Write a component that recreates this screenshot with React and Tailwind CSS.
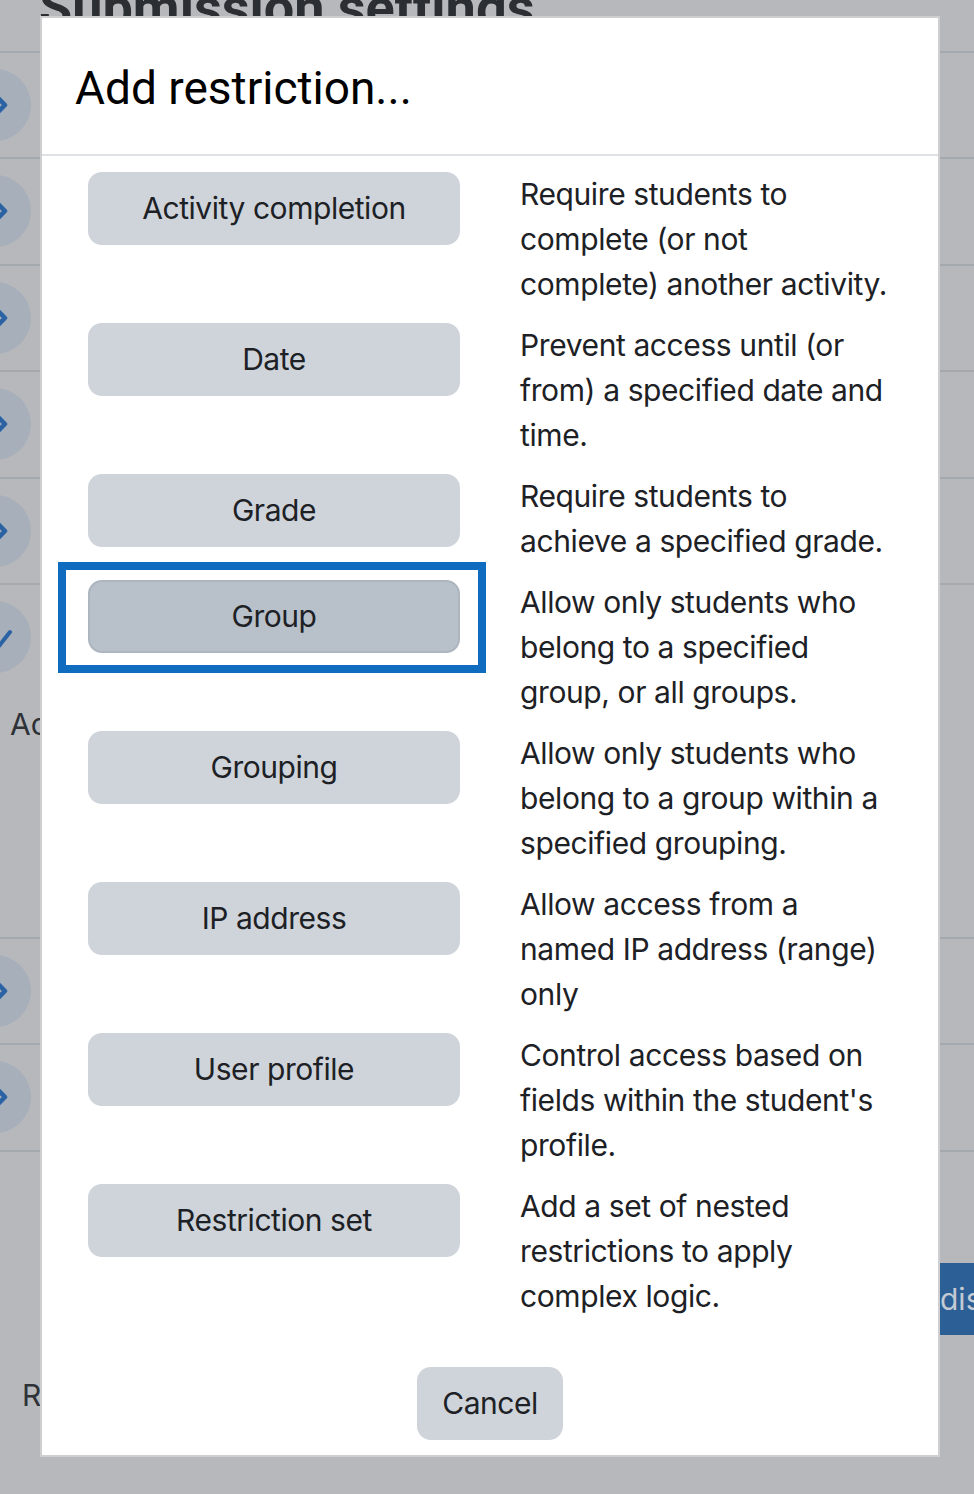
import React from "react";

const rows = [
  { label: "Activity completion", lines: ["Require students to", "complete (or not", "complete) another activity."] },
  { label: "Date", lines: ["Prevent access until (or", "from) a specified date and", "time."] },
  { label: "Grade", lines: ["Require students to", "achieve a specified grade."] },
  { label: "Group", lines: ["Allow only students who", "belong to a specified", "group, or all groups."], focused: true },
  { label: "Grouping", lines: ["Allow only students who", "belong to a group within a", "specified grouping."] },
  { label: "IP address", lines: ["Allow access from a", "named IP address (range)", "only"] },
  { label: "User profile", lines: ["Control access based on", "fields within the student's", "profile."] },
  { label: "Restriction set", lines: ["Add a set of nested", "restrictions to apply", "complex logic."] },
];

// page rows behind the backdrop: height, and what sits on the left
const pageRows = [
  { h: "h-[106px]", icon: "chevron" },
  { h: "h-[107px]", icon: "chevron" },
  { h: "h-[106px]", icon: "chevron" },
  { h: "h-[107px]", icon: "chevron" },
  { h: "h-[106px]", icon: "chevron" },
  { h: "h-[354px]", icon: "pen", text: "Ac" },
  { h: "h-[106px]", icon: "chevron" },
  { h: "h-[107px]", icon: "chevron" },
];

function Circle({ icon }) {
  return (
    <div className="w-[72px] h-[72px] rounded-full bg-[#a7afba] ml-[-41px] shrink-0">
      <svg viewBox="0 0 72 72" className="w-[72px] h-[72px]">
        {icon === "chevron" ? (
          <polyline points="38,28 46,36 38,44" fill="none" stroke="#2a62a3" strokeWidth="4.5" strokeLinecap="round" strokeLinejoin="round" />
        ) : (
          <line x1="40" y1="45" x2="51" y2="31" stroke="#2a62a3" strokeWidth="4" strokeLinecap="round" />
        )}
      </svg>
    </div>
  );
}

function RestrictionRow({ label, lines, focused }) {
  return (
    <div className="flex items-start mb-4">
      <div className="relative w-[372px] shrink-0">
        {focused && (
          <div className="absolute left-[-30px] right-[-26px] top-[-18px] bottom-[-20px] border-[8px] border-[#0f6cbf]"></div>
        )}
        <button
          className={`relative w-full h-[73px] rounded-[14px] text-[30px] leading-[45px] tracking-[-0.45px] text-[#1d2125] ${
            focused ? "bg-[#b8c0c9] border-2 border-[#adb5bf]" : "bg-[#ced4da]"
          }`}
        >
          {label}
        </button>
      </div>
      <div className="ml-[60px] text-[30px] leading-[45px] tracking-[-0.4px] text-[#1d2125] whitespace-nowrap">
        {lines.map((line, i) => (
          <div key={i}>{line}</div>
        ))}
      </div>
    </div>
  );
}

export default function App() {
  return (
    <div className="relative w-[974px] h-[1494px] overflow-hidden bg-[#b7b8bc] font-['Inter','Liberation_Sans',sans-serif]">
      {/* Page behind the backdrop */}
      <div className="flex flex-col">
        <div className="h-[51px] overflow-hidden">
          <div className="mt-[-19px] ml-[39px] text-[54px] leading-none font-bold text-[#2b2e33] font-['Roboto',sans-serif] whitespace-nowrap">
            Submission settings
          </div>
        </div>
        {pageRows.map((r, i) => (
          <div key={i} className={`${r.h} border-t-2 border-[#a4a9b0] flex flex-col`}>
            <div className="h-[104px] flex items-center">
              <Circle icon={r.icon} />
            </div>
            {r.text && <div className="mt-[13px] ml-[10px] text-[30px] leading-[45px] text-[#2e3236]">{r.text}</div>}
          </div>
        ))}
        <div className="border-t-2 border-[#a4a9b0] flex flex-col">
          <div className="h-[111px]"></div>
          <div className="h-[72px] pl-[940px] flex">
            <div className="bg-[#2b5f95] text-[#c3cad3] text-[30px] leading-[72px] whitespace-nowrap pr-6">display</div>
          </div>
          <div className="mt-[38px] ml-[22px] text-[30px] leading-[45px] text-[#2e3236]">R</div>
        </div>
      </div>

      {/* Modal */}
      <div className="absolute left-[40px] top-[16px] w-[900px] bg-white border-2 border-[#cfcfd1]">
        <div className="h-[138px] flex items-center pl-[33px] pt-[3px] border-b-2 border-[#dee2e6]">
          <h5 className="text-[46px] leading-none text-black font-['Roboto',sans-serif]">Add restriction...</h5>
        </div>
        <div className="pt-4 pl-[46px]">
          {rows.map((r) => (
            <RestrictionRow key={r.label} {...r} />
          ))}
        </div>
        <div className="pt-8 pb-[15px] flex justify-center">
          <button className="h-[73px] px-[25px] rounded-[14px] bg-[#ced4da] text-[30px] leading-[45px] tracking-[-0.5px] text-[#1d2125]">
            Cancel
          </button>
        </div>
      </div>
    </div>
  );
}
